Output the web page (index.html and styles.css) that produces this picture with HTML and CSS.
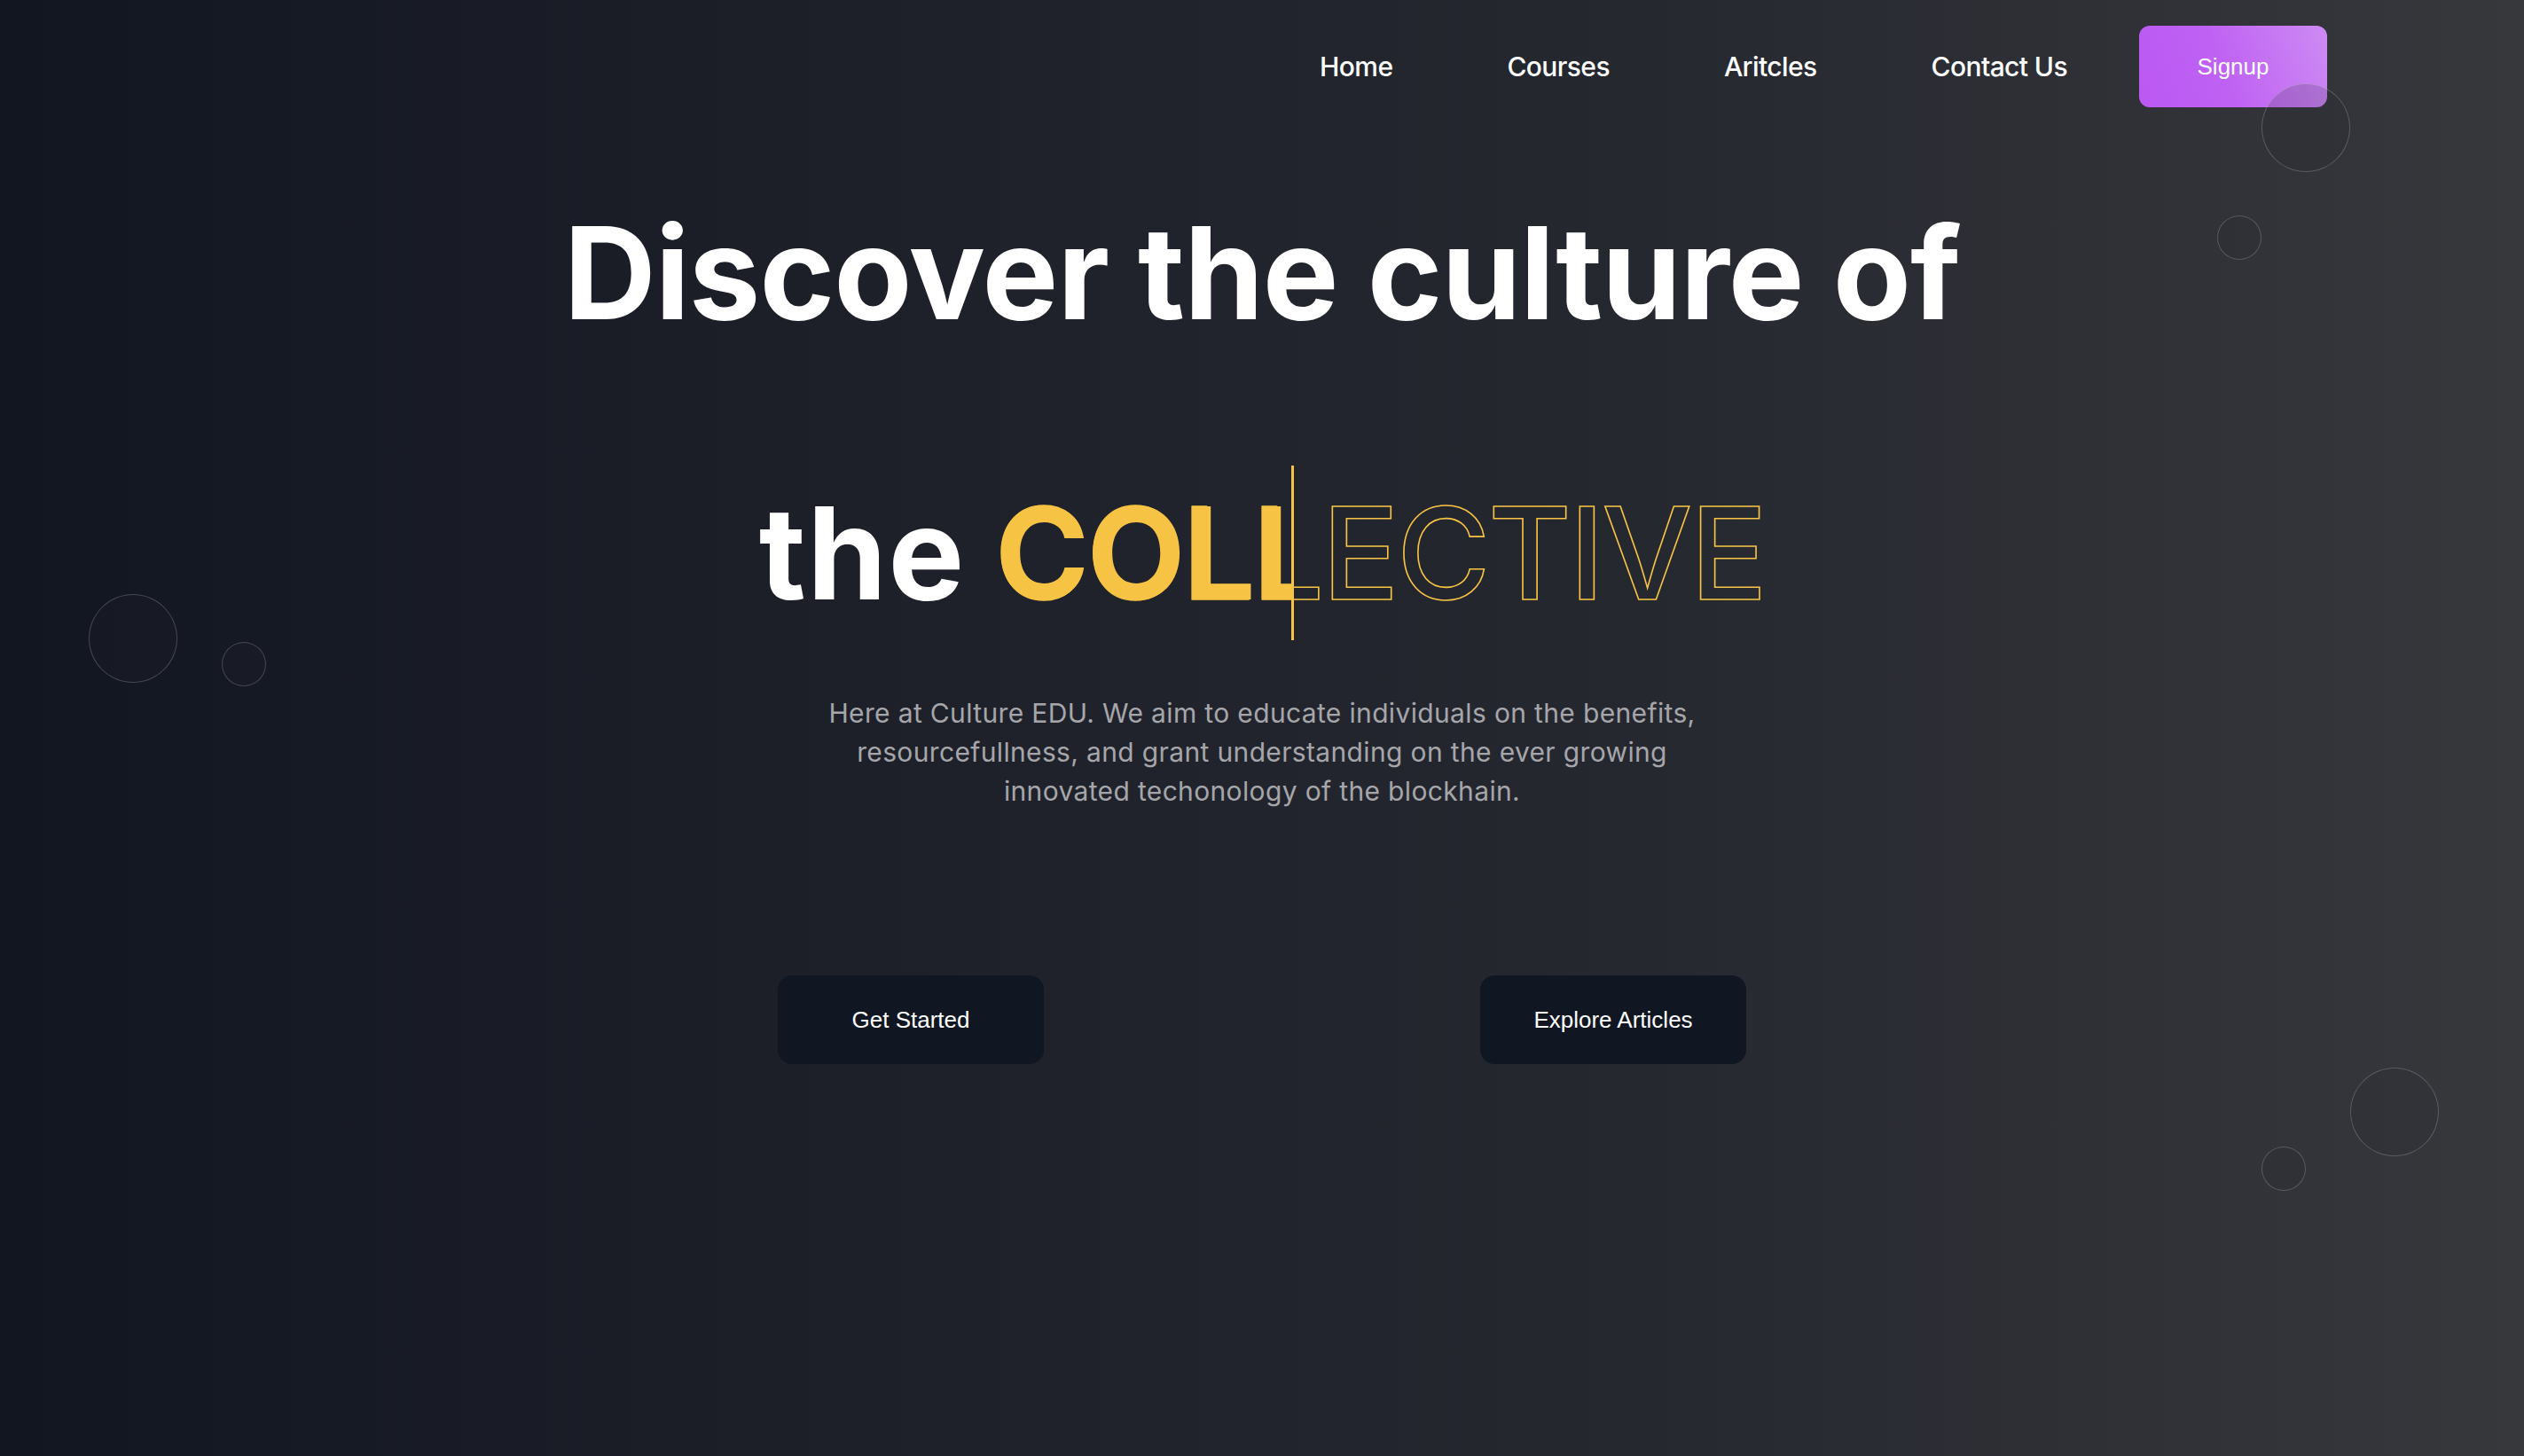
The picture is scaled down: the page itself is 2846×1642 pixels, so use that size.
FILE: index.html
```html
<!DOCTYPE html>
<html lang="en">
<head>
<meta charset="utf-8">
<title>Culture EDU</title>
<link rel="stylesheet" href="styles.css">
</head>
<body>
<div class="page">
  <span class="bubble bubble-lg b1"></span>
  <span class="bubble bubble-sm b2"></span>
  <span class="bubble bubble-lg b3"></span>
  <span class="bubble bubble-sm b4"></span>
  <span class="bubble bubble-lg b5"></span>
  <span class="bubble bubble-sm b6"></span>

  <header class="nav">
    <ul class="nav-links">
      <li><a href="#">Home</a></li>
      <li><a href="#">Courses</a></li>
      <li><a href="#">Aritcles</a></li>
      <li><a href="#">Contact Us</a></li>
    </ul>
    <a class="signup" href="#">Signup</a>
  </header>

  <main class="hero">
    <h1 class="title">
      <span class="line">Discover the culture of</span>
      <span class="line"><span class="the">the</span> <span class="word">COLLECTIVE</span></span>
    </h1>
    <p class="lead">Here at Culture EDU. We aim to educate individuals on the benefits, resourcefullness, and grant understanding on the ever growing innovated techonology of the blockhain.</p>
    <div class="actions">
      <a class="btn" href="#">Get Started</a>
      <a class="btn" href="#">Explore Articles</a>
    </div>
  </main>
</div>
</body>
</html>
```
FILE: styles.css
```css
* { box-sizing: border-box; }

html, body {
  margin: 0;
  padding: 0;
}

body {
  width: 2846px;
  height: 1642px;
  overflow: hidden;
  font-family: "Inter", "Noto Sans", sans-serif;
  color: #fff;
  background: linear-gradient(to right, #121621 0%, #1c1f28 30%, #262830 65%, #37383c 100%);
}

a { color: inherit; text-decoration: none; }

.page {
  position: relative;
  width: 2846px;
  height: 1642px;
}

/* decorative bubbles */
.bubble {
  position: absolute;
  border-radius: 50%;
  border: 1.5px solid rgba(255, 255, 255, 0.2);
  background: rgba(40, 40, 50, 0.18);
  z-index: 5;
}
.bubble-lg { width: 100px; height: 100px; }
.bubble-sm { width: 50px; height: 50px; }
.b1 { left: 2550px; top: 94px; }
.b2 { left: 2500px; top: 243px; }
.b3 { left: 100px; top: 670px; }
.b4 { left: 250px; top: 724px; }
.b5 { left: 2650px; top: 1204px; }
.b6 { left: 2550px; top: 1293px; }

/* nav */
.nav {
  display: flex;
  justify-content: flex-end;
  align-items: center;
  padding: 29px 222px 0 0;
}

.nav-links {
  display: flex;
  gap: 129px;
  list-style: none;
  margin: 0;
  padding: 0;
  font-size: 30px;
  font-weight: 500;
  letter-spacing: -0.6px;
}

.signup {
  margin-left: 81px;
  width: 212px;
  height: 92px;
  display: flex;
  align-items: center;
  justify-content: center;
  border-radius: 12px;
  font-family: "Liberation Sans", Arial, sans-serif;
  font-size: 26px;
  background: linear-gradient(70deg, #bb58f3 0%, #bf62f3 45%, #cd8bf3 100%);
}

/* hero */
.hero {
  display: flex;
  flex-direction: column;
  align-items: center;
}

.title {
  margin: 29px 0 0;
  font-size: 144px;
  font-weight: 700;
  line-height: 316px;
  letter-spacing: -1px;
  text-align: center;
}

.line { display: block; white-space: nowrap; }

.the { letter-spacing: 1.5px; }

.word {
  position: relative;
  display: inline-block;
  line-height: 197px;
  letter-spacing: -2.5px;
  color: transparent;
  font-weight: 500;
  -webkit-text-stroke: 1.6px #f6c344;
}

/* typed (filled) portion of the word + caret */
.word::before {
  content: "COLLECTIVE";
  position: absolute;
  left: 0;
  top: 0;
  height: 100%;
  width: 334px;
  overflow: hidden;
  white-space: nowrap;
  font-weight: 700;
  color: #f6c344;
  -webkit-text-stroke: 0;
  border-right: 3px solid #f6c344;
}

.lead {
  margin: 0;
  width: 1030px;
  font-size: 30px;
  line-height: 44px;
  color: #a6a6aa;
  text-align: center;
  letter-spacing: 0.35px;
}

.actions {
  display: flex;
  gap: 492px;
  margin-top: 186px;
}

.btn {
  width: 300px;
  height: 100px;
  display: flex;
  align-items: center;
  justify-content: center;
  border-radius: 16px;
  background: #111722;
  font-family: "Liberation Sans", Arial, sans-serif;
  font-size: 26px;
}
```
